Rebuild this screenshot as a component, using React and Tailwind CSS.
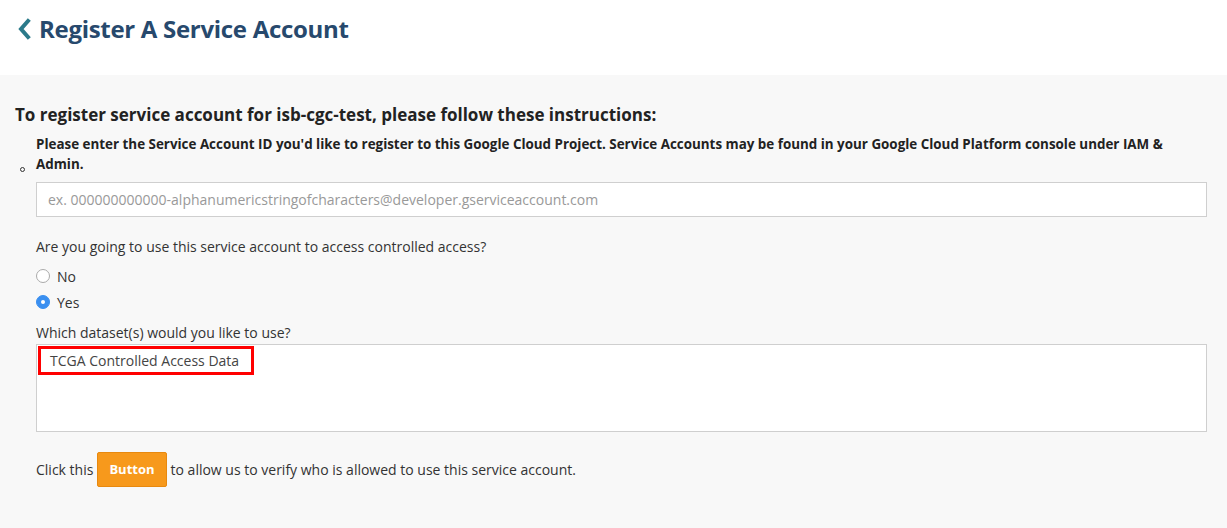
import { useState } from "react"

function App() {
    const [access, setAccess] = useState("yes")

    return (
        <div className="min-h-[528px] bg-[#f8f8f8] text-[#333] font-['Open_Sans','Liberation_Sans',sans-serif]">
            <div className="h-[75px] bg-white flex items-center pl-[16px] pb-[18px]">
                <svg width="16" height="22" viewBox="0 0 16 22" className="mr-[7px]">
                    <path d="M12 3 L5 11 L12 19" fill="none" stroke="#2b7a8a" strokeWidth="4" strokeLinecap="square" />
                </svg>
                <h1 className="text-[24px] font-bold text-[#27496d] tracking-[-0.3px]">
                    Register A Service Account
                </h1>
            </div>

            <div className="pl-[15px] pr-[20px] pt-[29px]">
                <h2 className="text-[17px] font-bold text-[#222] leading-[22px]">
                    To register service account for isb-cgc-test, please follow these instructions:
                </h2>

                <div className="mt-[8px] flex">
                    <div className="w-[21px] flex items-end pb-[2px] pl-[5px]">
                        <span className="w-[5px] h-[5px] rounded-full border border-[#333]" />
                    </div>
                    <p className="flex-1 text-[13.4px] font-bold text-[#222] leading-[20px]">
                        Please enter the Service Account ID you'd like to register to this Google Cloud Project. Service Accounts may be found in your Google Cloud Platform console under IAM &amp; Admin.
                    </p>
                </div>

                <div className="pl-[21px]">
                    <input
                        className="mt-[8px] w-full h-[35px] bg-white border border-[#cfcfcf] px-[11px] text-[14px] text-[#333] placeholder:text-[#999] outline-none"
                        placeholder="ex. 000000000000-alphanumericstringofcharacters@developer.gserviceaccount.com"
                    />

                    <p className="mt-[20px] text-[14px] leading-[20px]">
                        Are you going to use this service account to access controlled access?
                    </p>

                    <div className="mt-[9px] flex flex-col gap-[6px] text-[14px]">
                        <label className="flex items-center gap-[7px] h-[20px]" onClick={() => setAccess("no")}>
                            <span
                                className={`w-[14px] h-[14px] rounded-full border flex items-center justify-center ${
                                    access === "no" ? "bg-[#3a8ff0] border-[#3a8ff0]" : "bg-white border-[#aaa]"
                                }`}
                            >
                                {access === "no" && <span className="w-[4px] h-[4px] rounded-full bg-white" />}
                            </span>
                            No
                        </label>
                        <label className="flex items-center gap-[7px] h-[20px]" onClick={() => setAccess("yes")}>
                            <span
                                className={`w-[14px] h-[14px] rounded-full border flex items-center justify-center ${
                                    access === "yes" ? "bg-[#3a8ff0] border-[#3a8ff0]" : "bg-white border-[#aaa]"
                                }`}
                            >
                                {access === "yes" && <span className="w-[4px] h-[4px] rounded-full bg-white" />}
                            </span>
                            Yes
                        </label>
                    </div>

                    <p className="mt-[11px] text-[14px] leading-[20px]">Which dataset(s) would you like to use?</p>
                    <div className="mt-[1px] h-[88px] bg-white border border-[#cfcfcf] pt-[1px] pl-[1px]">
                        <div className="inline-flex items-center h-[29px] border-[3px] border-[#f00] pl-[9px] pr-[12px] text-[14px] text-[#444]">
                            TCGA Controlled Access Data
                        </div>
                    </div>

                    <div className="mt-[20px] flex items-center text-[14px] text-[#333]">
                        <span>Click this</span>
                        <button className="ml-[4px] mr-[4px] h-[35px] px-[11px] bg-[#f7991c] border border-[#e8890f] rounded-[2px] text-white text-[13px] font-bold">
                            Button
                        </button>
                        <span>to allow us to verify who is allowed to use this service account.</span>
                    </div>
                </div>
            </div>
        </div>
    )
}

export default App
